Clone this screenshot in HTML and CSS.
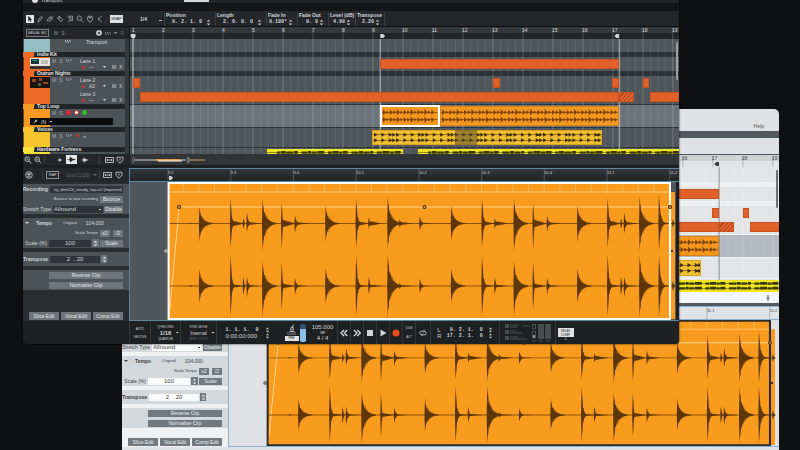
FILE: index.html
```html
<!DOCTYPE html>
<html lang="en">
<head>
  <meta charset="UTF-8">
  <meta name="viewport" content="width=device-width, initial-scale=1.0">
  <title>Studio</title>
  <link rel="stylesheet" href="styles.css">
</head>
<body>
  <!-- Shared icons -->
  <svg class="sprite" aria-hidden="true">
    <symbol id="i-steps" viewBox="0 0 5 7"><path d="M.7 2.6 2.5.7l1.8 1.9zM.7 4.4 2.5 6.3l1.8-1.9z"/></symbol>
    <symbol id="i-zoomer" viewBox="0 0 8 8"><circle cx="3.2" cy="3.2" r="2.3" class="line"/><path d="m5 5 2.4 2.4M2.2 3.2h2" class="line"/></symbol>
    <symbol id="i-fit" viewBox="0 0 9 6"><path d="M.5.5h8v5h-8zM1.5 3h6M2.5 2v2M6.500 2v2" class="line"/></symbol>
    <symbol id="i-shield" viewBox="0 0 8 8"><path d="M1 1.200h6v3L4 7.300 1 4.200zM4 2.500v2" class="line"/></symbol>
    <symbol id="i-sine" viewBox="0 0 6 5"><path d="M.5 1v1.500l1 1.500M2.500 1l1 3M4.500 1l1 2" class="line"/></symbol>
    <symbol id="i-wave" viewBox="0 0 8 6"><path d="M0 2.700 2 2.700 3 .3 4.500 2 8 3 4.500 4 3 5.700 2 3.300 0 3.300z"/></symbol>
  </svg>

  <main class="stage">
    <!-- Light theme window -->
    <section class="window light">
      <header class="title"><a href="#help">Help</a></header>
      <div class="strip"></div>
      <div class="toolbar"></div>
      <div class="arrange">
        <div class="heads"></div>
        <div class="timeline">
          <svg class="ruler"></svg>
          <div class="lanes"></div>
        </div>
      </div>
      <div class="zoombar"><svg class="mark" viewBox="0 0 4 6"><path d="M2 0v6M.5 3h3" class="line"/></svg></div>
      <div class="editor">
        <aside class="side"></aside>
        <div class="canvas">
          <svg class="beat-ruler"></svg>
          <svg class="wave" viewBox="0 0 548 138" preserveAspectRatio="none"></svg>
        </div>
      </div>
    </section>

    <!-- Dark theme window -->
    <section class="window dark">
      <header class="menu"><i class="logo"></i><span>Transport</span><i class="tab"></i></header>
      <div class="strip"></div>
      <div class="toolbar">
        <div class="tools">
          <button class="on" aria-label="Select"><svg viewBox="0 0 8 8"><path d="M2.200.8v5.400l1.300-1.100.9 2 .9-.4-.9-1.900h1.700z"/></svg></button>
          <button aria-label="Pencil"><svg viewBox="0 0 8 8"><path d="m2 7 .4-2L5 1.500l1.300 1L3.600 6z" class="line"/></svg></button>
          <button aria-label="Eraser"><svg viewBox="0 0 8 8"><path d="m1 5.500 3-3.700 3 .4-2.800 3.900zM3 3l2.500.7" class="line"/></svg></button>
          <button aria-label="Razor"><svg viewBox="0 0 8 8"><path d="m1.500 2.800 2-1.500 3.300 3.400L5 6.800zM3.500 1.300 3 4.500" class="line"/></svg></button>
          <button aria-label="Mute"><svg viewBox="0 0 8 8"><path d="M1.500 1.200h5v4.300H4L2 7M2.500 2.700h3M2.500 4h3" class="line"/></svg></button>
          <button aria-label="Magnify"><svg viewBox="0 0 8 8"><circle cx="3.300" cy="3.200" r="2.200" class="line"/><path d="m5 5 2.300 2.300" class="line"/></svg></button>
          <button aria-label="Hand"><svg viewBox="0 0 8 8"><path d="M1.500 4.200v-2h1v-1h3v1h1v2.500L5 6.800H3zM3.400 1.500v2M4.800 1.500v2" class="line"/></svg></button>
          <button aria-label="Speaker"><svg viewBox="0 0 8 8"><path d="M5.500 1 2.500 4l3 3M2.500 2.800v2.400" class="line"/></svg></button>
        </div>
        <button class="snap">SNAP</button>
        <select class="snap-value" aria-label="Snap value"><option>1/4</option></select>
        <label class="field wide">Position<span><input value="9. 2. 1. 0"><svg><use href="#i-steps"/></svg></span></label>
        <label class="field wide">Length<span><input value="2. 0. 0. 0"><svg><use href="#i-steps"/></svg></span></label>
        <label class="field">Fade In<span><input value="0.180*"><svg><use href="#i-steps"/></svg></span></label>
        <label class="field">Fade Out<span><input value="0. 0"><svg><use href="#i-steps"/></svg></span></label>
        <label class="field slim">Level (dB)<span><input value="4.99"><svg><use href="#i-steps"/></svg></span></label>
        <label class="field last">Transpose<span><input value="2.20"><svg><use href="#i-steps"/></svg></span></label>
      </div>

      <div class="arrange">
        <div class="heads">
          <div class="heads-bar">
            <button class="manual">MANUAL REC</button><b>M</b><b>S</b>
            <svg class="add" viewBox="0 0 6 6"><circle cx="3" cy="3" r="2.800"/><path d="M3 1.500v3M1.500 3h3"/></svg>
            <svg class="sine"><use href="#i-sine"/></svg><i class="drop"></i><b class="dim">R</b>
          </div>
          <div class="heads-list">
            <div class="track transport"><i class="color"></i><div class="body"><svg class="sine"><use href="#i-sine"/></svg><span>Transport</span></div></div>
            <div class="track-name red">Indie Kit</div>
            <div class="track red">
              <i class="color"><svg viewBox="0 0 20 11"><path fill="#e8e4dc" d="M0 0h20v11H0z"/><path fill="#16383a" d="M1 1h8v5H1z"/><path fill="#3c9a94" d="M3 2h4v1H3z"/><path fill="#b9bcb9" d="M11 2h7v4h-7z"/><path fill="#35312f" d="M0 8h20v3H0z"/></svg></i>
              <div class="body"><b>M</b><b>S</b><svg class="sine"><use href="#i-sine"/></svg></div>
              <div class="sub"><div><span>Lane 1</span><p><i class="rec"></i><em>—</em><i class="drop"></i><b>M</b><b>X</b></p></div></div>
            </div>
            <div class="track-name red">Outrun Nights</div>
            <div class="track red tall">
              <i class="color"><svg viewBox="0 0 20 11"><path fill="#1d1310" d="M0 0h20v11H0z"/><path fill="#8a4a22" d="M2 2h4v3H2zM9 1h3v3H9zM13 5h5v2h-5z"/><path fill="#46603a" d="M8 6h3v3H8z"/></svg></i>
              <div class="body"><b>M</b><b>S</b><svg class="sine"><use href="#i-sine"/></svg></div>
              <div class="sub">
                <div><span>Lane 2</span><p><i class="rec"></i><em>A2</em><i class="drop"></i><b>M</b><b>X</b></p></div>
                <div><span>Lane 3</span><p><i class="rec"></i><em>—</em><i class="drop"></i><b>M</b><b>X</b></p></div>
              </div>
            </div>
            <div class="track-name loop">Top Loop</div>
            <div class="track loop">
              <i class="color"></i>
              <div class="body"><b>M</b><b>S</b><i class="dot r"></i><i class="dot r ring"></i><i class="dot g"></i></div>
              <div class="input"><svg viewBox="0 0 5 5"><path d="m.5 4.500 2-2M3 .8 4.300 2 3 3 2 2z" class="line"/></svg>IN<i class="drop"></i></div>
            </div>
            <div class="track-name yellow">Voices</div>
            <div class="track yellow">
              <i class="color"></i>
              <div class="body"><b>M</b><b>S</b><svg class="sine"><use href="#i-sine"/></svg><i class="rec"></i><b>◂</b></div>
            </div>
            <div class="track-name lemon">Hardware Fortress</div>
            <div class="track lemon"><i class="color"></i><div class="body"></div></div>
          </div>
        </div>
        <div class="timeline">
          <svg class="ruler"></svg>
          <div class="lanes"></div>
        </div>
      </div>

      <div class="zoombar">
        <div class="zoom-left">
          <svg class="ico"><use href="#i-zoomer"/></svg><svg class="ico"><use href="#i-zoomer"/></svg><i class="sep"></i>
          <svg class="ico wave-small"><use href="#i-wave"/></svg>
          <button class="wave-mid" aria-label="Waveform size"><svg><use href="#i-wave"/></svg></button>
          <svg class="ico"><use href="#i-wave"/></svg><i class="sep"></i>
          <svg class="ico fit"><use href="#i-fit"/></svg><svg class="ico"><use href="#i-shield"/></svg>
        </div>
        <svg class="overview" viewBox="0 0 80 10">
          <path d="M4 5h52" stroke="#d8d2c4"/><path d="M26 5h24" stroke="#e8a04a" stroke-width="2"/><path d="M28 6h24" stroke="#fff"/><path d="M58 5h17" stroke="#d9a05a"/>
          <path d="M4 2Q1 5 4 8M58 2q3 3 0 6z" fill="#111" stroke="#aaa" stroke-width=".8"/>
        </svg>
      </div>

      <div class="editor">
        <aside class="side"></aside>
        <div class="canvas">
          <svg class="beat-ruler"></svg>
          <svg class="wave" viewBox="0 0 548 138" preserveAspectRatio="none"></svg>
        </div>
      </div>

      <footer class="transport-bar">
        <div class="cell auto"><small>AUTO</small><small>GROOVE</small></div>
        <div class="cell quant"><small>Q RECORD</small><strong>1/16<i class="drop"></i></strong><small>QUANTIZE</small></div>
        <div class="cell sync"><small>SYNC MODE</small><span>Internal<i class="drop"></i></span><small class="dim">SEND CLOCK</small></div>
        <div class="cell time"><div><code>1. 1. 1.  0</code><span>0:00:00:000</span></div><div class="pair"><svg><use href="#i-steps"/></svg><svg><use href="#i-steps"/></svg></div></div>
        <div class="cell click"><svg viewBox="0 0 6 8"><path d="M.500 7.500h5M1.500 6l1-3h1.500l.5 3zM3 4 4.500.500" class="line"/></svg><small>CLICK</small><button>PRE</button></div>
        <input class="level" type="range" aria-label="Click level" value="85">
        <div class="cell tempo"><strong>105.000</strong><small>TAP</small><strong>4 / 4</strong></div>
        <button class="key" aria-label="Rewind"><svg viewBox="0 0 8 8"><path d="M4 1 1 4l3 3M7.300 1l-3 3 3 3" class="bold"/></svg></button>
        <button class="key" aria-label="Forward"><svg viewBox="0 0 8 8"><path d="m1 1 3 3-3 3M4.300 1l3 3-3 3" class="bold"/></svg></button>
        <button class="key" aria-label="Stop"><svg viewBox="0 0 8 8"><path d="M1 1h6v6H1z"/></svg></button>
        <button class="key" aria-label="Play"><svg viewBox="0 0 8 8"><path d="m1.500.5 6 3.500-6 3.500z"/></svg></button>
        <button class="key rec-key" aria-label="Record"><svg viewBox="0 0 8 8"><circle cx="4" cy="4" r="3.500"/></svg></button>
        <div class="cell dub"><small>DUB</small><small>ALT</small></div>
        <button class="key loop-key" aria-label="Loop"><svg viewBox="0 0 8 8"><path d="M2 5.500C.3 5 .3 2.500 2 2.200h3.500M6 2.500c1.700.5 1.700 3 0 3.300H2.500M4.500 1l1.200 1.200-1.200 1.200M3.500 4.600 2.300 5.800 3.500 7" class="line"/></svg></button>
        <div class="cell locs"><div><b>L</b><b>R</b></div><div><code> 9. 2. 1.  0</code><code>17. 2. 1.  0</code></div><div class="pair"><svg><use href="#i-steps"/></svg><svg><use href="#i-steps"/></svg></div></div>
        <div class="cell meters">
          <svg viewBox="0 0 46 18">
            <path fill="#4b4d4f" d="M0 0h4v4H0zM0 6h4v4H0zM0 12h4v4H0zM33 0h6v15h-6zM40 0h6v15h-6z"/>
            <path stroke="#4b4d4f" d="M5 1h9M5 3h7M5 7h6M5 9h12M5 13h8M5 15h17M18 2h7M27 17h4M34 17h4M41 17h4"/>
            <path fill="none" stroke="#66686a" stroke-width=".7" d="M27.500.500h3v4h-3zM27.500 7h3v7h-3z"/><path fill="#8a8c8e" d="M28 11h2v3h-2z"/>
          </svg>
        </div>
        <div class="cell delay"><button>DELAY<br>COMP</button><small>0</small></div>
      </footer>
    </section>
  </main>

  <!-- Clip settings, used by both editors -->
  <template id="panel">
    <div class="side-bar">
      <svg class="close" viewBox="0 0 8 8"><circle cx="4" cy="4" r="3.300" class="line"/><path d="m2.500 2.500 3 3M5.500 2.500l-3 3" class="bold"/></svg>
      <i class="sep"></i><button class="snap-box">SNAP</button><span class="grid-value">Grid (1/16)<i class="drop"></i></span><i class="sep"></i>
      <svg class="ico fit"><use href="#i-fit"/></svg><svg class="ico"><use href="#i-shield"/></svg>
    </div>
    <div class="side-body">
      <div class="group">
        <label class="row covered"><b>Recording</b><input class="long" value="ny_drm124_steady_top.rx2 (Imported)"></label>
        <div class="row covered"><span class="hint">Bounce to new recording</span><button>Bounce</button></div>
        <div class="row"><label>Stretch Type <select><option>Allround</option></select></label><button>Disable</button></div>
      </div>
      <div class="group">
        <div class="row tempo-row"><i class="drop"></i><b>Tempo</b><span>Original</span><em>104.000</em></div>
        <div class="row"><span class="hint">Scale Tempo</span><button class="half">x2</button><button class="half">/2</button></div>
        <div class="row"><label>Scale (%) <input class="num" value="100"></label><i class="spin"><svg><use href="#i-steps"/></svg></i><button>Scale</button></div>
      </div>
      <div class="group pad">
        <div class="row"><label><b>Transpose</b> <input class="num big" value="2  . 20"></label><i class="spin"><svg><use href="#i-steps"/></svg></i></div>
      </div>
      <div class="group">
        <div class="row"><button class="full">Reverse Clip</button></div>
        <div class="row"><button class="full">Normalise Clip</button></div>
      </div>
      <div class="modes"><button>Slice Edit</button><button>Vocal Edit</button><button>Comp Edit</button></div>
    </div>
  </template>

  <script src="script.js"></script>
</body>
</html>
```
FILE: styles.css
```css
* {
  box-sizing: border-box;
}
body {
  margin: 0;
  background: #0f1012;
  font-family: "Liberation Sans", Arial, sans-serif;
  font-size: 5px;
  line-height: 6px;
}
button, input, select {
  margin: 0;
  padding: 0;
  border: 0;
  border-radius: 0;
  background: none;
  color: inherit;
  font: inherit;
  appearance: none;
}
svg {
  display: block;
  fill: currentColor;
}
i, em {
  font-style: normal;
}
b {
  font-weight: normal;
}
p {
  margin: 0;
}
small {
  font-size: 3px;
  line-height: 4px;
}
code {
  display: block;
  font-family: "Liberation Mono", monospace;
  font-size: 5px;
  font-weight: bold;
  white-space: pre;
}
.sprite {
  position: absolute;
  width: 0;
  height: 0;
}
.line {
  fill: none;
  stroke: currentColor;
  stroke-width: 0.8;
}
.bold {
  fill: none;
  stroke: currentColor;
  stroke-width: 1.4;
}
.drop {
  flex: none;
  width: 4px;
  height: 2px;
  background: currentColor;
  clip-path: polygon(0 0, 100% 0, 50% 100%);
}
.sep {
  width: 1px;
  height: 8px;
  background: var(--edge);
}

/* Windows */
.stage {
  position: relative;
  min-height: 100vh;
  overflow: hidden;
}
.window {
  position: absolute;
  width: 82%;
  background: var(--base);
  color: var(--text);
  overflow: hidden;
  isolation: isolate;
}
.dark {
  --base: #1c1e20;
  --bar: #242629;
  --group: #4d5257;
  --gap: #2b2e31;
  --well: #303438;
  --button: #6f757a;
  --text: #d3d6d8;
  --button-text: #e6e8ea;
  --edge: #3c3f42;
  --lane: #50565b;
  --lane-gap: #2d3236;
  --lane-on: #6a747a;
  --tick: #fff;
  --canvas: #50565c;
  --frame: #5a89a8;
  --clip-edge: #fff;
  top: 0;
  left: 2.875%;
  border-radius: 0 0 4px 4px;
  box-shadow: 0 0 2px #000;
}
.light {
  --base: #dfe1e4;
  --bar: #e2e4e7;
  --group: #d4d8db;
  --gap: #eff1f2;
  --well: #fafbfb;
  --button: #71787e;
  --text: #3a3e42;
  --button-text: #eef0f1;
  --edge: #a9adb1;
  --lane: #e3e4e5;
  --lane-gap: #eeefef;
  --lane-on: #b4babf;
  --tick: #fff;
  --canvas: #dfe1e4;
  --frame: #86b4d8;
  --clip-edge: #2b2b2b;
  top: 109px;
  left: 15.250%;
  min-height: 341px;
  width: 82.125%;
  border-radius: 0 5px 0 0;
}
.title {
  display: flex;
  justify-content: flex-end;
  height: 22px;
  padding: 14px 15px 0;
}
.title a {
  color: #555;
  text-decoration: none;
}
.light .strip {
  height: 7px;
  background: #54595d;
}
.light .toolbar {
  height: 17px;
  border-bottom: 1px solid #54595d;
}
.menu {
  display: flex;
  align-items: flex-end;
  height: 3px;
  padding-left: 9px;
  background: #232527;
  overflow: hidden;
}
.menu .logo {
  width: 6px;
  height: 6px;
  margin-right: 3px;
  border-radius: 3px;
  background: #ddd;
}
.menu span {
  line-height: 5px;
}
.menu .tab {
  width: 25px;
  height: 2px;
  margin: 0 0 1px 122px;
  background: #d5d7d9;
}
.dark .strip {
  height: 8px;
  background: #151618;
}

/* Toolbar */
.dark .toolbar {
  display: flex;
  align-items: center;
  height: 16px;
  background: var(--bar);
  border-bottom: 1px solid #0f1011;
}
.tools {
  display: flex;
  gap: 2px;
  width: 87px;
  padding-left: 3px;
}
.tools button {
  width: 8px;
  height: 8px;
  color: #a5a8aa;
}
.tools .on {
  background: #e4e6e8;
  color: #222;
}
.snap {
  width: 13px;
  height: 8px;
  background: #dfe1e3;
  color: #222;
  font-size: 4px;
  line-height: 8px;
}
.snap-value {
  width: 41px;
  padding-left: 17px;
  background: linear-gradient(#bbb, #bbb) 36px 4px / 3px 1px no-repeat;
  font-weight: bold;
}
.field {
  width: 31px;
  padding-left: 1px;
  border-left: 1px solid var(--edge);
  line-height: 7px;
  font-weight: bold;
  white-space: nowrap;
}
.field.wide {
  width: 51px;
}
.field.slim {
  width: 27px;
}
.field.last {
  width: 30px;
  border-right: 1px solid var(--edge);
}
.field span {
  display: flex;
  align-items: center;
  justify-content: flex-end;
  height: 7px;
}
.field input {
  min-width: 0;
  width: 100%;
  font-family: "Liberation Mono", monospace;
  text-align: right;
}
.field svg {
  flex: none;
  width: 5px;
  height: 7px;
  margin: 0 4px 0 4px;
}
.field:not(.wide) svg {
  margin: 0 4px 0 1px;
}

/* Track list */
.arrange {
  display: flex;
}
.heads {
  flex: none;
  width: 107px;
  border-right: 1px solid #1a1c1e;
}
.heads-bar {
  display: flex;
  align-items: center;
  gap: 3px;
  height: 12px;
  padding-left: 3px;
  background: var(--bar);
  color: #8f9396;
}
.manual {
  width: 23px;
  height: 8px;
  margin-right: 2px;
  border: 1px solid #777b7e;
  color: #c9cccf;
  font-size: 3px;
  line-height: 6px;
}
.heads-bar .add {
  width: 6px;
  height: 6px;
  margin-left: 28px;
  fill: #e4e6e8;
}
.heads-bar .add path {
  stroke: #222;
}
.dim {
  color: #63676a;
}
.sine {
  width: 6px;
  height: 5px;
}
.heads-list {
  height: 115px;
  border-right: 4px solid #34383b;
  background: var(--group);
  overflow: hidden;
}
.track {
  display: flex;
  position: relative;
  height: 14px;
}
.track .color {
  flex: none;
  width: 27px;
  height: 100%;
  border-left: 1px solid #0008;
  background: var(--hue);
}
.track .color svg {
  width: 20px;
  height: 11px;
  margin: 1px 0 0 6px;
}
.track .body {
  display: flex;
  gap: 3px;
  min-width: 29px;
  height: 8px;
  padding: 1px 2px;
  color: #a5a9ac;
}
.track.transport {
  --hue: #93bec6;
  height: 13px;
}
.transport .body {
  padding: 0 0 0 15px;
  gap: 15px;
  color: var(--text);
}
.track-name {
  height: 5px;
  padding-left: 14px;
  background: linear-gradient(100deg, var(--hue) 11px, #222528 12px);
  color: #e3e5e6;
  font-weight: bold;
  line-height: 5px;
  white-space: nowrap;
}
.red {
  --hue: #ee6a24;
}
.loop {
  --hue: #f59a23;
}
.yellow {
  --hue: #f8c42c;
}
.lemon {
  --hue: #f4e13c;
}
.track.tall {
  height: 28px;
}
.sub {
  flex: 1;
}
.sub > div {
  height: 14px;
  padding-top: 1px;
}
.sub p {
  display: flex;
  align-items: center;
  padding-left: 3px;
}
.sub span {
  display: block;
  padding-left: 1px;
}
.sub em {
  width: 18px;
  padding-left: 4px;
}
.sub .drop {
  margin-right: 6px;
  width: 3px;
}
.sub p b {
  width: 7px;
}
.rec {
  flex: none;
  width: 3px;
  height: 3px;
  border-radius: 2px;
  background: #cf2f36;
}
.body .rec {
  margin: 1px;
}
.track.loop {
  height: 18px;
}
.dot {
  flex: none;
  width: 5px;
  height: 5px;
  border-radius: 3px;
}
.dot.r {
  background: #e02b30;
}
.dot.ring {
  border: 1px solid #e02b30;
  background: #fff;
}
.dot.g {
  background: #2fbf2b;
}
.track .input {
  display: flex;
  align-items: center;
  gap: 3px;
  position: absolute;
  left: 7px;
  right: 12px;
  bottom: 2px;
  height: 7px;
  padding-left: 3px;
  background: #0b0c0d;
}
.input svg {
  width: 5px;
  height: 5px;
}
.track.yellow {
  height: 15px;
}

/* Timeline */
.timeline {
  flex: 1;
  min-width: 0;
}
.ruler {
  width: 100%;
  height: 12px;
  background: linear-gradient(#36393c 6px, #222528 6px);
}
.light .ruler {
  background: linear-gradient(#d0d2d4 6px, #e4e5e7 6px);
}
.ruler line, .beat-ruler line {
  stroke: #7c8185;
}
.lanes {
  position: relative;
  background: var(--lane-gap);
}
.grid {
  position: absolute;
  inset: 0;
  width: 100%;
  height: 100%;
}
.grid line {
  stroke: var(--tick);
  opacity: 0.08;
}
.grid .bar {
  opacity: 0.2;
}
.cursors {
  pointer-events: none;
}
.grid .loop-line {
  opacity: 0.6;
}
.light .grid .loop-line {
  stroke: #555;
}
.lane {
  position: relative;
  height: 14px;
  background: var(--lane);
}
.lane.first {
  height: 13px;
}
.light .lane.first {
  height: 15px;
}
.lane.after-gap {
  margin-top: 5px;
}
.lane.loop {
  height: 22px;
  margin-top: 1px;
  background: var(--lane-on);
}
.lane.voices {
  height: 19px;
  margin-top: 1px;
}
.light .lane.voices {
  height: 20px;
}
.lane.hard {
  height: 6px;
  margin-top: 1px;
}
.light .lane.hard {
  height: 13px;
}
.clip {
  position: absolute;
  top: 2px;
  bottom: 2px;
  z-index: 1;
  background: #e0622a;
  border: 1px solid #c9531f;
  overflow: hidden;
}
.clip svg {
  width: 100%;
  height: 100%;
}
.clip.hatch {
  background: repeating-linear-gradient(135deg, #e0622a 0 2px, #a5451c 2px 3px);
}
.clip.loop {
  top: 1px;
  bottom: 1px;
  background: #f6981f;
  border-color: #d98218;
  color: #7b4509;
}
.clip.on {
  top: 0;
  bottom: 0;
  border: 2px solid #fff;
}
.light .clip.on {
  border-color: #333;
}
.clip.voices {
  border-color: #d9a51f;
  background: #f1bd31;
  color: #3f300c;
}
.clip.muted {
  border: 0;
  background: #5a4d2888;
}
.clip.hard {
  top: 1px;
  bottom: 0;
  border: 0;
  background: #efe326;
  color: #3b3907;
}
.clip.hard svg {
  height: 12px;
}
.scroller {
  position: absolute;
  top: 3px;
  right: 1px;
  width: 2px;
  height: 38px;
  border-radius: 1px;
  background: #9ba0a3;
}
.light .scroller {
  background: #6d7174;
}

/* Zoom bar */
.zoombar {
  display: flex;
  align-items: center;
  height: 11px;
  background: #323538;
}
.light .zoombar {
  justify-content: flex-end;
  padding-right: 9px;
  border-radius: 0 0 4px 0;
  background: #f4f5f6;
}
.mark {
  width: 4px;
  height: 6px;
}
.zoom-left {
  display: flex;
  align-items: center;
  gap: 2px;
  width: 107px;
  height: 11px;
  padding-left: 1px;
  background: var(--bar);
}
.ico {
  flex: none;
  width: 8px;
  height: 8px;
}
.ico.fit {
  width: 9px;
  height: 6px;
}
.zoom-left .wave-small {
  height: 4px;
  margin-left: 9px;
}
.zoom-left .fit {
  margin-left: 3px;
}
.wave-mid {
  width: 11px;
  height: 9px;
  padding: 1px;
  background: #e4e6e8;
  color: #222;
}
.wave-mid svg {
  width: 9px;
  height: 7px;
}
.wave-mid + .ico {
  margin: 0 8px 0 2px;
}
.overview {
  width: 80px;
  height: 10px;
}

/* Clip editor */
.editor {
  display: flex;
  margin-top: 3px;
  height: 153px;
}
.light .editor {
  height: 141px;
  box-shadow: 0 -3px 0 #54595d;
}
.side {
  display: flex;
  flex-direction: column;
  flex: none;
  width: 107px;
  border-right: 1px solid var(--frame);
}
.side-bar {
  display: flex;
  align-items: center;
  gap: 3px;
  height: 14px;
  padding-left: 2px;
  background: var(--bar);
}
.close {
  flex: none;
  width: 8px;
  height: 8px;
  margin-right: 6px;
}
.snap-box {
  width: 13px;
  height: 8px;
  border: 1px solid #8d9194;
  font-size: 3px;
  line-height: 6px;
}
.grid-value {
  display: flex;
  align-items: center;
  gap: 3px;
  width: 34px;
  padding-left: 4px;
  color: #6a6e71;
  white-space: nowrap;
}
.side-body {
  display: flex;
  flex-direction: column;
  flex: 1;
  gap: 4px;
  padding: 2px 0 1px;
  background: var(--gap);
}
/* these lie under the front window */
.light .side-bar, .light .covered {
  visibility: hidden;
}
.group {
  background: var(--group);
}
.group.pad {
  padding: 2px 0;
}
.row {
  display: flex;
  align-items: center;
  justify-content: flex-end;
  gap: 1px;
  height: 10px;
  padding-right: 6px;
}
.row label, label.row {
  display: flex;
  align-items: center;
  gap: 2px;
  white-space: nowrap;
}
.group b {
  font-weight: bold;
}
.row button, .modes button {
  width: 23px;
  height: 7px;
  background: var(--button);
  color: var(--button-text);
  line-height: 7px;
}
.row .half {
  width: 10px;
}
.row .half + .half {
  margin-left: 2px;
}
.row .full {
  width: 74px;
}
.row .long, .row select, .num {
  height: 7px;
  background: var(--well);
}
.row .long {
  width: 74px;
  padding-right: 1px;
  font-size: 4px;
  text-align: right;
}
.row .hint {
  margin-right: 1px;
  font-size: 4px;
}
.row select {
  width: 50px;
  padding-left: 1px;
  font-size: 6px;
  line-height: 7px;
  background: linear-gradient(currentColor, currentColor) 46px 3px / 2px 1px no-repeat, var(--well);
}
.num {
  width: 42px;
  font-size: 6px;
  text-align: center;
  white-space: pre;
}
.num.big {
  width: 50px;
}
.spin {
  display: grid;
  place-items: center;
  width: 7px;
  height: 8px;
  background: var(--button);
  color: var(--button-text);
}
.spin svg {
  width: 5px;
  height: 7px;
}
.pad .spin {
  margin-right: 16px;
}
.tempo-row {
  justify-content: flex-start;
  padding-left: 2px;
}
.tempo-row b {
  margin-left: 6px;
}
.tempo-row span {
  margin-left: 10px;
  font-size: 4px;
}
.tempo-row em {
  margin-left: 8px;
}
.modes {
  display: flex;
  justify-content: center;
  gap: 2px;
  margin-top: auto;
}
.modes button {
  width: 30px;
  height: 8px;
  line-height: 8px;
}
.canvas {
  display: flex;
  flex-direction: column;
  flex: 1;
  min-width: 0;
  background: var(--canvas);
  border-bottom: 1px solid var(--frame);
}
.beat-ruler {
  flex: none;
  width: 100%;
  height: 14px;
  background: linear-gradient(#32373c, #202326);
  border-top: 1px solid var(--frame);
  border-bottom: 1px solid var(--frame);
}
.light .beat-ruler {
  background: #dfe2e6;
}
.ruler text, .beat-ruler text {
  fill: currentColor;
  font-size: 5px;
}
.beat-ruler text {
  font-size: 4px;
}
.wave {
  width: 100%;
  flex: 1;
  min-height: 0;
}
.light .wave .end {
  fill: none;
}
.wave .shape {
  fill: #5d3709;
}
.wave .guide {
  fill: none;
  stroke: #ffd48f;
  stroke-width: 1;
}
.wave .axis {
  stroke: #8a540d;
}
.wave .node {
  fill: #f99b1d;
  stroke: #3c2a12;
}
.wave .frame {
  fill: none;
  stroke: var(--clip-edge);
  stroke-width: 2;
}

/* Transport */
.transport-bar {
  display: flex;
  align-items: stretch;
  height: 23px;
  padding-left: 106px;
  background: #1e2022;
  color: #d2d4d6;
}
.cell {
  display: flex;
  flex-direction: column;
  align-items: center;
  justify-content: center;
  border-left: 1px solid #34373a;
  white-space: nowrap;
}
.auto {
  width: 21px;
  gap: 4px;
}
.quant {
  width: 30px;
  gap: 1px;
}
.sync {
  width: 36px;
  gap: 1px;
}
.quant strong, .sync span {
  display: flex;
  align-items: center;
  gap: 4px;
  margin-left: 8px;
}
.quant strong {
  font-size: 6px;
}
.time {
  flex-direction: row;
  gap: 6px;
  width: 62px;
}
.time span {
  display: block;
  font-size: 6px;
}
.pair svg {
  width: 5px;
  height: 6px;
}
.click {
  width: 22px;
  padding-left: 5px;
  border: 0;
}
.click svg {
  width: 6px;
  height: 8px;
}
.click button {
  width: 14px;
  height: 5px;
  background: #dfe1e3;
  color: #222;
  font-size: 3px;
  line-height: 5px;
}
.level {
  width: 6px;
  height: 18px;
  margin: 3px 2px 0 0;
  border-radius: 2px;
  background: linear-gradient(#35506a 5px, #8cc0e6 5px);
}
.level::-webkit-slider-thumb {
  appearance: none;
  width: 0;
  height: 0;
}
.tempo {
  width: 29px;
  border: 0;
}
.tempo strong {
  font-size: 6px;
  line-height: 7px;
  font-weight: normal;
}
.key {
  display: grid;
  place-items: center;
  width: 13px;
  border-left: 1px solid #34373a;
}
.key svg {
  width: 8px;
  height: 8px;
}
.rec-key svg {
  fill: #ee4a1c;
}
.dub {
  width: 13px;
  gap: 5px;
}
.key.loop-key {
  width: 15px;
}
.locs {
  flex-direction: row;
  gap: 5px;
  width: 69px;
}
.locs b {
  display: block;
  font-size: 6px;
}
.meters {
  width: 56px;
}
.meters svg {
  width: 46px;
  height: 18px;
}
.delay {
  width: 20px;
  padding-top: 4px;
}
.delay button {
  width: 16px;
  height: 9px;
  background: #dfe1e3;
  color: #222;
  font-size: 3px;
  line-height: 4px;
}
```
FILE: script.js
```js
const WIDTH = 548; // timeline units
const BAR = 29.94;
const pct = x => (x / WIDTH * 100).toFixed(2) + '%';

// [lane class, clips: [start, end, extra class]]
const lanes = [
  ['first', []],
  ['midi after-gap', [[249.7, 488.3]]],
  ['midi after-gap', [[3, 10], [362, 369], [481.5, 488.3], [511.7, 518.3]]],
  ['midi', [[10.3, 488.3], [488.3, 503, 'hatch'], [518.7, 548]]],
  ['loop', [[309, 488.3, 'loop'], [249.7, 309, 'loop on']]],
  ['voices', [[242, 470.7, 'voices'], [324, 346, 'muted']]],
  ['hard', [[137, 272, 'hard'], [287, 548, 'hard']]]
];

// Two rows of short hits for the clips in the arrangement
function miniWave(width, kind) {
  let d = '';
  for (const y of [6.5, 15.5]) {
    d += `M0 ${y - 0.4}H${width}v.8H0z`;
    if (kind === 'hard') {
      for (let i = 0, x = 10; x < width - 6; i++) {
        const len = 3 + (i * 7) % 5;
        d += `M${x} ${y - 2 - i % 2}h${len}v${4 + i % 2}h-${len}z`;
        x += len + 0.6 + (i % 4 === 3 ? 3 : 0);
      }
      continue;
    }
    const step = kind === 'voices' ? 7.4 : 3.7;
    for (let i = 0, x = 1; x < width - 4; x += step, i++) {
      const amp = kind === 'voices' ? 3.4 : [4, 2, 3.2, 2.4][i % 4];
      const len = kind === 'voices' ? 4 : 3.4;
      d += `M${x} ${y - amp}L${x + len} ${y}L${x} ${y + amp}z`;
      if (kind === 'voices' && i % 4 === 2) d += `M${x + 3.5} ${y - amp}l3.500 ${amp}l-3.500 ${amp}z`;
    }
  }
  return `<svg viewBox="0 0 ${width} 22" preserveAspectRatio="none"><path d="${d}"/></svg>`;
}

function drawLanes(el) {
  let grid = '';
  for (let i = 0; i < 74; i++) {
    const x = pct(3 + i * BAR / 4);
    grid += `<line x1="${x}" x2="${x}" y1="0" y2="100%"${i % 4 ? '' : ' class="bar"'}/>`;
  }
  const cursors = [3, 249.7, 488.3].map(x =>
    `<line class="loop-line" x1="${pct(x)}" x2="${pct(x)}" y1="0" y2="100%"/>`).join('');

  el.innerHTML = lanes.map(([name]) => `<div class="lane ${name}"></div>`).join('')
    + `<svg class="grid">${grid}</svg><svg class="grid cursors">${cursors}</svg><i class="scroller"></i>`;

  lanes.forEach(([name, clips], i) => {
    clips.forEach(([from, to, extra = '']) => {
      const clip = document.createElement('div');
      clip.className = 'clip ' + extra;
      clip.style.left = pct(from);
      clip.style.width = pct(to - from);
      if (/loop|voices|hard/.test(extra)) clip.innerHTML = miniWave(to - from, name);
      el.children[i].append(clip);
    });
  });
}

function drawRuler(el) {
  let out = '';
  for (let bar = 1; bar <= 19; bar++) {
    const x = 3 + (bar - 1) * BAR;
    out += `<line x1="${pct(x)}" x2="${pct(x)}" y1="1" y2="12" opacity=".5"/>`
      + `<text x="${pct(x - 1)}" y="5">${bar}</text>`;
  }
  // left and right locators
  out += `<svg x="${pct(249.7)}" y="6" width="5" height="6"><path d="M0 1h3l2 2-2 2H0z"/></svg>`
    + `<svg x="${pct(483.5)}" y="6" width="5" height="6"><path d="M5 1H2L0 3l2 2h3z"/></svg>`
    + `<svg x="${pct(0.5)}" y="6" width="6" height="6"><path d="M0 1h5v3L3 6 0 4z"/></svg>`;
  el.innerHTML = out;
}

function drawBeatRuler(el) {
  const beats = ['9.2', '9.3', '9.4', '10.1', '10.2', '10.3', '10.4', '11.1', '11.2'];
  el.innerHTML = beats.map((label, i) => {
    const x = 38 + i * 62.6;
    return `<line x1="${pct(x)}" x2="${pct(x)}" y1="0" y2="12" opacity=".5"/>`
      + `<text x="${pct(x)}" y="5">${label}</text>`;
  }).join('') + `<svg x="${pct(39)}" y="7" width="5" height="5"><path d="M0 0h2l2 2-2 2H0z"/></svg>`;
}

// x, top peaks, bottom peaks, decay, noise tail
const hits = [
  [60, 1, 1, 1, 1, 1, 0], [69.3, 17, 18, 17, 17, 4, 0], [100.3, 25, 24, 31, 30, 1.2, 4],
  [113, 5, 5, 9, 9, 0.7, 0], [116.7, 11, 8, 9, 11, 1.5, 2], [132.3, 25, 28, 25, 31, 4, 0],
  [151.3, 20, 25, 23, 23, 0.7, 5], [164.7, 8, 9, 8, 9, 1.6, 2], [195.3, 18, 18, 18, 18, 4, 0],
  [225.7, 25, 24, 31, 30, 1.4, 3], [238.3, 6, 5, 9, 8, 0.9, 3], [257.3, 27, 26, 32, 31, 4, 3],
  [269, 4, 4, 3, 3, 2, 2], [289.3, 7, 7, 7, 7, 1.6, 1], [320.7, 18, 17, 18, 17, 4, 0],
  [351.3, 25, 24, 31, 30, 1.4, 3], [364, 5, 5, 9, 8, 0.9, 3], [383.3, 25, 28, 25, 30, 4, 0],
  [402.3, 20, 25, 23, 23, 0.7, 5], [416.3, 8, 8, 8, 8, 1.6, 2], [446.7, 18, 18, 18, 17, 4, 0],
  [476.7, 25, 24, 31, 30, 1.4, 4], [490, 5, 5, 9, 9, 0.7, 0], [493.3, 11, 10, 9, 11, 1.5, 2],
  [508.7, 27, 27, 31, 31, 4, 3], [528, 30, 27, 31, 31, 1.8, 2], [541.7, 4, 4, 5, 5, 1, 0]
];

function hitPath(x, mid, up, down, decay, noise) {
  const top = [], bottom = [];
  const len = Math.min(14, 545 - x);
  for (let t = 0; t <= len; t += 0.5) {
    const rough = 0.8 + 0.2 * Math.cos(t * 7 + x);
    const tail = t > 1 ? noise * rough * (1 - t / 14) : 0;
    const env = t < 0.6 ? 1 - t / 2 : Math.exp(-(t - 0.5) / decay) * rough * 0.8;
    const px = (x + t).toFixed(1);
    top.push(`${px} ${(mid - Math.max(up * env, tail)).toFixed(1)}`);
    bottom.unshift(`${px} ${(mid + Math.max(down * env, tail)).toFixed(1)}`);
  }
  return `M${x - 0.6} ${mid}L${top.join('L')}L${bottom.join('L')}z`;
}

function drawWave(el) {
  let shape = '';
  for (const [x, u1, d1, u2, d2, decay, noise] of hits) {
    shape += hitPath(x, 41.5, u1, d1, decay, noise);
    shape += hitPath(x, 104, u2, d2, decay, noise * 0.6);
  }
  let beats = '';
  for (let x = 53; x < 538; x += 15.67) beats += `M${x.toFixed(1)} 2v8`;

  el.innerHTML = `
    <path fill="#f99b1d" d="M38 1h502v136H38zM540 10h4v127h-4z"/>
    <path fill="#1d2024" d="M545 0h3v138h-3z" class="end"/>
    <path class="guide" opacity=".5" d="${beats}"/>
    <path class="guide" d="M39 10h500M39 136 49 25H539"/>
    <path class="axis" d="M38 41.500h506M38 104h506"/>
    <path class="shape" d="${shape}"/>
    <path class="frame" d="M38.500 1H539v136H38.500z"/>
    <circle class="node" cx="49" cy="25" r="1.500"/>
    <circle class="node" cx="294" cy="25" r="1.500"/>
    <circle class="node" cx="539" cy="25" r="1.500"/>
    <circle cx="36" cy="69" r="1.300" fill="none" stroke="currentColor"/>
    <circle cx="541" cy="69" r="1" fill="#111"/>`;
}

document.querySelectorAll('.side').forEach(side =>
  side.append(document.getElementById('panel').content.cloneNode(true)));
document.querySelectorAll('.lanes').forEach(drawLanes);
document.querySelectorAll('.ruler').forEach(drawRuler);
document.querySelectorAll('.beat-ruler').forEach(drawBeatRuler);
document.querySelectorAll('.wave').forEach(drawWave);
```
